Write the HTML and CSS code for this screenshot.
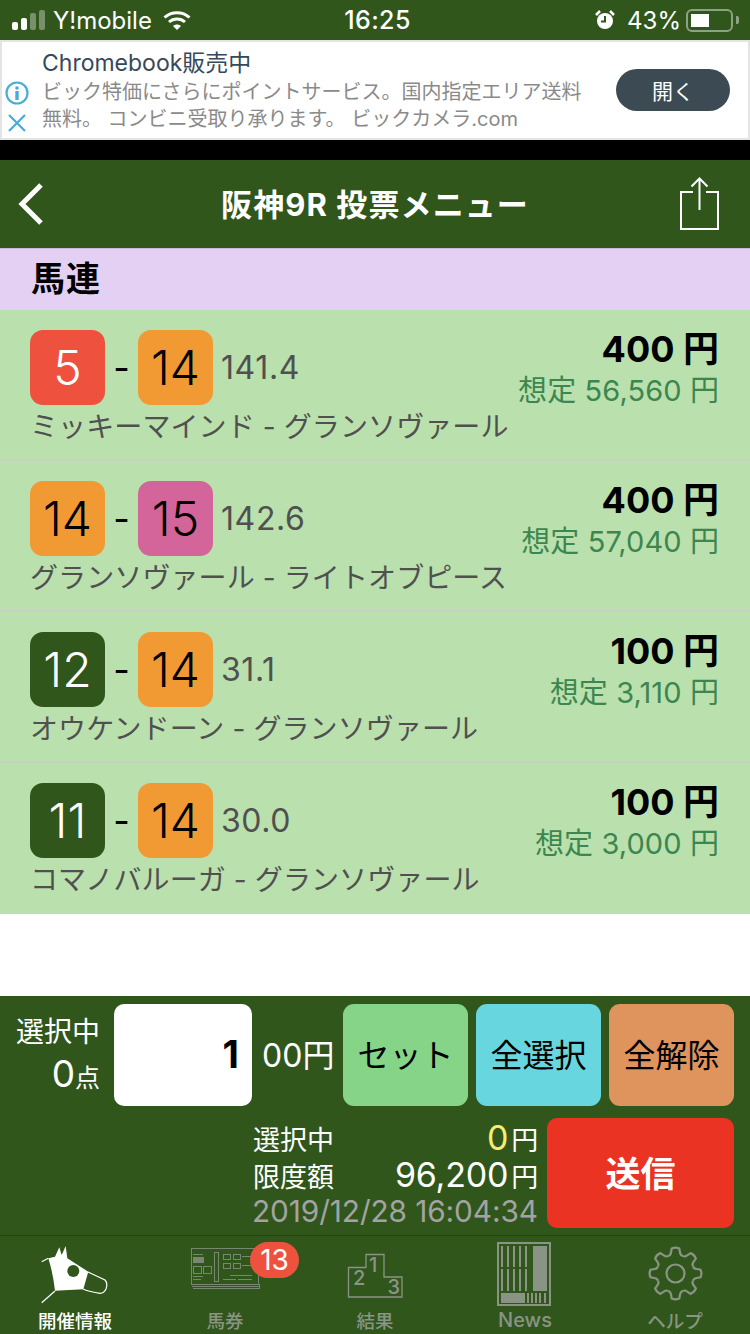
FILE: index.html
```html
<!DOCTYPE html>
<html lang="ja">
<head>
<meta charset="utf-8">
<title>阪神9R 投票メニュー</title>
<link rel="stylesheet" href="styles.css">
</head>
<body>
<div class="app">
  <div class="status">
    <div class="status-left">
      <span class="signal"><i class="on s1"></i><i class="on s2"></i><i class="s3"></i><i class="s4"></i></span>
      <span class="carrier">Y!mobile</span>
      <svg class="wifi" width="28" height="20" viewBox="0 0 28 20"><path d="M1.500 7.500C8.500 1 19.500 1 26.500 7.500" fill="none" stroke="#fff" stroke-width="3"/><path d="M6 12c4.500-4 11.500-4 16 0" fill="none" stroke="#fff" stroke-width="3"/><path d="M10 16c2.400-2 5.600-2 8 0l-4 4z" fill="#fff"/></svg>
    </div>
    <span class="time">16:25</span>
    <div class="status-right">
      <svg class="alarm" width="20" height="20" viewBox="0 0 20 20"><circle cx="10" cy="11" r="8" fill="#fff"/><path d="M10 6v5.500H6" fill="none" stroke="#30561c" stroke-width="2"/><path d="M1 5l4-4M19 5l-4-4" stroke="#fff" stroke-width="2.500"/></svg>
      <span class="pct">43%</span>
      <span class="battery"><span class="battery-fill"></span></span>
      <span class="battery-tip"></span>
    </div>
  </div>

  <div class="ad">
    <div class="ad-icons">
      <svg width="24" height="24" viewBox="0 0 24 24"><circle cx="12" cy="12" r="10.500" fill="none" stroke="#45aed3" stroke-width="2.200"/><circle cx="12" cy="7" r="1.800" fill="#45aed3"/><rect x="10.300" y="10" width="3.400" height="9" fill="#45aed3"/></svg>
      <svg width="18" height="18" viewBox="0 0 18 18"><path d="M1 1l16 16M17 1L1 17" stroke="#45aed3" stroke-width="2.200" fill="none"/></svg>
    </div>
    <div class="ad-text">
      <div class="ad-title">Chromebook販売中</div>
      <div class="ad-body">ビック特価にさらにポイントサービス。国内指定エリア送料無料。 コンビニ受取り承ります。 ビックカメラ.com</div>
    </div>
    <span class="ad-btn">開く</span>
  </div>
  <div class="blackbar"></div>

  <div class="nav">
    <svg class="back" width="28" height="44" viewBox="0 0 28 44"><path d="M24 3L5 22l19 19" fill="none" stroke="#fff" stroke-width="5"/></svg>
    <span class="nav-title">阪神9R 投票メニュー</span>
    <svg class="share" width="40" height="54" viewBox="0 0 40 54"><path d="M13 15H1v37h37V15H26" fill="none" stroke="#fff" stroke-width="2"/><path d="M19.500 33V2M11.500 9.500l8-8 8 8" fill="none" stroke="#fff" stroke-width="2"/></svg>
  </div>

  <div class="section">馬連</div>

  <div class="list">
    <div class="row">
      <div class="row-left">
        <div class="pair"><span class="num red">5</span><span class="dash">-</span><span class="num orange">14</span><span class="odds">141.4</span></div>
        <div class="names">ミッキーマインド - グランソヴァール</div>
      </div>
      <div class="row-right"><div class="stake">400 円</div><div class="est">想定 56,560 円</div></div>
    </div>
    <div class="row">
      <div class="row-left">
        <div class="pair"><span class="num orange">14</span><span class="dash">-</span><span class="num pink">15</span><span class="odds">142.6</span></div>
        <div class="names">グランソヴァール - ライトオブピース</div>
      </div>
      <div class="row-right"><div class="stake">400 円</div><div class="est">想定 57,040 円</div></div>
    </div>
    <div class="row">
      <div class="row-left">
        <div class="pair"><span class="num green">12</span><span class="dash">-</span><span class="num orange">14</span><span class="odds">31.1</span></div>
        <div class="names">オウケンドーン - グランソヴァール</div>
      </div>
      <div class="row-right"><div class="stake">100 円</div><div class="est">想定 3,110 円</div></div>
    </div>
    <div class="row">
      <div class="row-left">
        <div class="pair"><span class="num green">11</span><span class="dash">-</span><span class="num orange">14</span><span class="odds">30.0</span></div>
        <div class="names">コマノバルーガ - グランソヴァール</div>
      </div>
      <div class="row-right"><div class="stake">100 円</div><div class="est">想定 3,000 円</div></div>
    </div>
  </div>

  <div class="spacer"></div>

  <div class="panel">
    <div class="panel-top">
      <div class="sel">
        <div>選択中</div>
        <div class="sel-count"><span class="big">0</span><span class="small">点</span></div>
      </div>
      <div class="input">1</div>
      <div class="unit">00円</div>
      <div class="btn b-set">セット</div>
      <div class="btn b-all">全選択</div>
      <div class="btn b-clear">全解除</div>
    </div>
    <div class="panel-bottom">
      <div class="summary">
        <div class="sum-row"><span>選択中</span><span><span class="yellow">0</span><span class="yen">円</span></span></div>
        <div class="sum-row"><span>限度額</span><span>96,200<span class="yen">円</span></span></div>
        <div class="stamp">2019/12/28 16:04:34</div>
      </div>
      <div class="send">送信</div>
    </div>
  </div>

  <div class="tabs">
    <div class="tab active">
      <svg width="70" height="62" viewBox="0 0 70 62"><path d="M15 13.700L19.300 4.300 21.700 12 25.700 3 27.300 15.300 48.300 28.700 43.300 46.300 15 47.700Q13 30 8.300 15.300z" fill="#fff"/><path d="M48 29L65 37Q68 40 66 46Q64 50.300 60 50.300Q50 49 43 46M1.700 18.700L8.300 15.300M1.700 59.700L15 48" fill="none" stroke="#fff" stroke-width="1.200"/><circle cx="33.300" cy="28" r="6" fill="#30561c"/></svg>
      <span>開催情報</span>
    </div>
    <div class="tab">
      <svg class="ticket" width="70" height="62" viewBox="0 0 70 62"><g fill="none" stroke="#8a9485" stroke-width="1"><rect x="1.500" y="5.500" width="67" height="36"/><path d="M2 43.500h67M3 45.500h67M69.500 41v5"/><rect x="24.500" y="9.500" width="4" height="29"/><rect x="33.500" y="11.500" width="7" height="5"/><rect x="43.500" y="11.500" width="7" height="5"/><rect x="33.500" y="20.500" width="7" height="5"/><rect x="43.500" y="20.500" width="7" height="5"/><rect x="3.500" y="23.500" width="8" height="7"/><rect x="13.500" y="23.500" width="8" height="7"/><path d="M3 11.500h10M3 33.500h10M3 36.500h8M33 36.500h13M48 36.500h14M40 32.500h22M52 13.500h14M52 22.500h10"/></g><rect x="3" y="14" width="11" height="6" fill="#8a9485"/></svg>
      <span>馬券</span>
      <em class="badge">13</em>
    </div>
    <div class="tab">
      <svg width="70" height="62" viewBox="0 0 70 62"><path d="M8.500 24.500H26V11.500H44V34H62V54H8.500z" fill="none" stroke="#8a9485" stroke-width="1.300"/><text x="29" y="29" class="podium">1</text><text x="13" y="42" class="podium">2</text><text x="47.500" y="51" class="podium">3</text></svg>
      <span>結果</span>
    </div>
    <div class="tab tab-news">
      <svg width="54" height="64" viewBox="0 0 54 64"><rect x="1" y="1" width="52" height="62" fill="none" stroke="#8a9485" stroke-width="2"/><rect x="36" y="4" width="14" height="45" fill="#8a9485"/><rect x="4" y="51" width="24" height="10" fill="#8a9485"/><path d="M5 4v21M11 4v21M17 4v21M23 4v21M29 4v21M5 27v22M11 27v22M17 27v22M23 27v22M29 27v22M31 51v10M35 51v10M39 51v10M43 51v10M48 51v10" stroke="#8a9485" stroke-width="2" fill="none"/></svg>
      <span>News</span>
    </div>
    <div class="tab">
      <svg width="70" height="62" viewBox="0 0 70 62"><defs><path id="tooth" d="M-7.270-17.550Q-5-18-4.500-21L-3.800-25Q0-26.800 3.800-25L4.500-21Q5-18 7.270-17.550" fill="none" stroke="#8a9485" stroke-width="2.200"/></defs><g transform="translate(35.500 30.500)"><circle r="9" fill="none" stroke="#8a9485" stroke-width="2.200"/><use href="#tooth"/><use href="#tooth" transform="rotate(45)"/><use href="#tooth" transform="rotate(90)"/><use href="#tooth" transform="rotate(135)"/><use href="#tooth" transform="rotate(180)"/><use href="#tooth" transform="rotate(225)"/><use href="#tooth" transform="rotate(270)"/><use href="#tooth" transform="rotate(315)"/></g></svg>
      <span>ヘルプ</span>
    </div>
  </div>
</div>
</body>
</html>
```
FILE: styles.css
```css
* { box-sizing: border-box; }
html, body { margin: 0; padding: 0; }
body { width: 750px; height: 1334px; overflow: hidden; background: #fff; font-family: Inter, "Noto Sans CJK JP", sans-serif; }
.app { width: 750px; height: 1334px; display: flex; flex-direction: column; }

.status { height: 40px; flex: none; background: #30561c; color: #fff; display: grid; grid-template-columns: 1fr auto 1fr; align-items: center; font-size: 24px; }
.status-left { display: flex; align-items: center; gap: 7px; padding-left: 12px; }
.signal { display: flex; align-items: flex-end; gap: 3px; height: 20px; margin-right: 1px; }
.signal i { width: 6px; background: rgba(255,255,255,.35); border-radius: 2px; }
.signal i.on { background: #fff; }
.s1 { height: 8px; } .s2 { height: 12px; } .s3 { height: 17px; } .s4 { height: 20px; }
.carrier { margin-right: 4px; }
.time { font-weight: 500; font-size: 25px; letter-spacing: .4px; margin-left: 5px; }
.status-right { display: flex; align-items: center; justify-content: flex-end; padding-right: 11px; }
.alarm { margin-right: 12px; }
.pct { margin-right: 5px; }
.battery { width: 47px; height: 23px; border: 2px solid rgba(255,255,255,.45); border-radius: 6px; padding: 3px; display: block; }
.battery-fill { display: block; width: 18px; height: 13px; background: #fff; }
.battery-tip { width: 3px; height: 8px; background: rgba(255,255,255,.45); margin-left: 3px; border-radius: 0 2px 2px 0; }

.ad { height: 100px; flex: none; background: #fff; border: 2px solid #e4e4e4; display: flex; position: relative; }
.ad-icons { width: 40px; flex: none; display: flex; flex-direction: column; align-items: center; gap: 9px; padding-top: 39px; padding-right: 16px; margin-left: 3px; }
.ad-text { width: 545px; flex: none; margin-left: -3px; }
.ad-title { font-size: 23px; line-height: 26px; color: #36485a; margin-top: 8px; }
.ad-body { font-size: 20px; line-height: 27px; color: #8a8a8a; margin-top: 3px; }
.ad-btn { position: absolute; top: 27px; left: 614px; width: 114px; height: 42px; border-radius: 21px; background: #3c4a54; color: #fff; font-size: 21px; display: flex; align-items: center; justify-content: center; }
.blackbar { height: 20px; flex: none; background: #000; }

.nav { height: 88px; flex: none; background: #30561c; display: grid; grid-template-columns: 1fr auto 1fr; align-items: center; padding: 0 30px 0 17px; color: #fff; }
.back { display: block; }
.nav-title { font-size: 31px; font-weight: 700; letter-spacing: 1.100px; margin: 2px 0 0 13px; line-height: 86px; }
.share { display: block; justify-self: end; }

.section { height: 62px; flex: none; background: #e3d0f2; border-top: 1px solid #c9b6d9; font-size: 34px; font-weight: 700; padding-left: 31px; line-height: 60px; color: #000; letter-spacing: 1px; }

.list { flex: none; }
.row { height: 151px; background: #bae0ad; border-bottom: 2px solid #c8cfc4; display: flex; justify-content: space-between; padding: 20px 31px 0 30px; }
.row:last-child { border-bottom: 0; }
.pair { display: flex; align-items: center; height: 75px; }
.num { width: 75px; height: 75px; border-radius: 13px; display: flex; align-items: center; justify-content: center; font-size: 48px; font-weight: 300; color: #000; }
.red { background: #ee523f; color: #fff; }
.orange { background: #f19a34; }
.pink { background: #d4659b; }
.green { background: #30561c; color: #fff; }
.dash { width: 33px; text-align: center; font-size: 36px; color: #000; }
.odds { font-size: 32px; color: #505050; margin-left: 8px; letter-spacing: .6px; }
.names { font-size: 28px; line-height: 40px; color: #505050; margin-top: 2px; white-space: nowrap; letter-spacing: .1px; }
.row-right { text-align: right; }
.stake { font-size: 36px; font-weight: 700; color: #000; line-height: 38px; }
.est { font-size: 29px; line-height: 42px; color: #3c8650; margin-top: 2px; white-space: nowrap; letter-spacing: .1px; }

.spacer { flex: 1; background: #fff; }

.panel { height: 239px; flex: none; background: #30561c; color: #fff; padding: 8px 16px 0; }
.panel-top { display: flex; align-items: stretch; height: 102px; }
.sel { width: 84px; font-size: 28px; text-align: right; line-height: 38px; padding-top: 9px; flex: none; }
.sel-count { margin-top: 4px; }
.big { font-size: 37px; }
.small { font-size: 25px; }
.input { width: 138px; margin-left: 14px; background: #fff; border-radius: 10px; color: #000; font-size: 38px; font-weight: 700; text-align: right; padding-right: 13px; line-height: 100px; flex: none; }
.unit { width: 91px; flex: none; font-size: 32px; line-height: 104px; padding-left: 10px; }
.btn { width: 125px; flex: none; margin-right: 8px; border-radius: 11px; color: #000; font-size: 32px; padding-bottom: 4px; display: flex; align-items: center; justify-content: center; }
.btn:last-child { margin-right: 0; }
.b-set { background: #86d488; }
.b-all { background: #68d6de; }
.b-clear { background: #df935d; }
.panel-bottom { display: flex; justify-content: flex-end; margin-top: 12px; }
.summary { width: 285px; flex: none; font-size: 27px; }
.sum-row { display: flex; justify-content: space-between; align-items: baseline; height: 37px; line-height: 40px; }
.sum-row > span:last-child { font-size: 34px; letter-spacing: -.2px; }
.yen { font-size: 27px; margin-left: 3px; }
.yellow { color: #f6ee6e; }
.stamp { font-size: 29.800px; line-height: 36px; color: #a3a3a3; white-space: nowrap; margin-top: 1px; letter-spacing: -.1px; margin-left: -1px; }
.send { width: 187px; height: 110px; margin-left: 9px; background: #ea3323; border-radius: 10px; color: #fff; font-size: 35px; font-weight: 700; padding-bottom: 4px; display: flex; align-items: center; justify-content: center; flex: none; }

.tabs { height: 99px; flex: none; background: #30561c; border-top: 1px solid #24441a; display: grid; grid-template-columns: repeat(5, 150px); }
.tab { position: relative; display: flex; flex-direction: column; align-items: center; color: #8a9485; font-size: 18.500px; font-weight: 500; line-height: 24px; padding-top: 7px; overflow: hidden; }
.tab svg { flex: none; display: block; }
.tab span { margin-top: 4px; white-space: nowrap; }
.ticket { opacity: .8; }
.tab-news svg { margin: -1px 3px 0 0; }
.tab-news span { margin-top: 2px; font-size: 20px; }
.tab.active { color: #fff; }
.badge { position: absolute; top: 6px; left: 100px; width: 49px; height: 36px; border-radius: 18px; background: #ee523f; color: #fff; font-style: normal; font-size: 28px; font-weight: 400; line-height: 36px; text-align: center; }
.podium { font-size: 20px; fill: #8a9485; font-family: Inter, sans-serif; }
```
